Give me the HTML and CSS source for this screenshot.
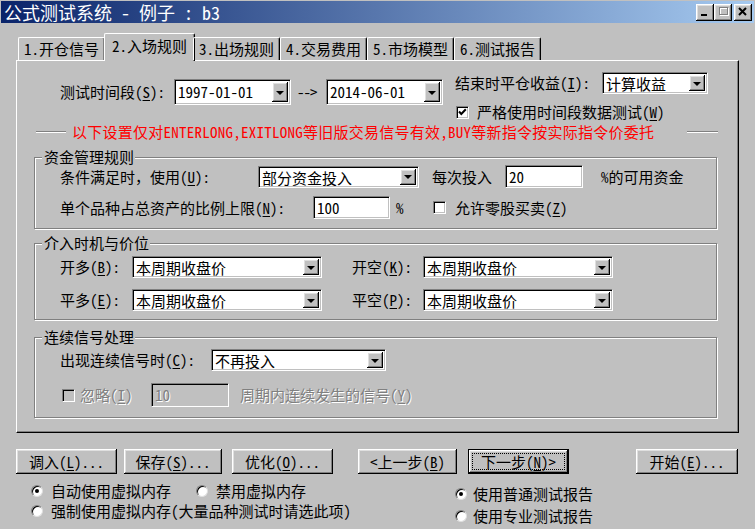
FILE: index.html
```html
<!DOCTYPE html>
<html lang="zh-CN">
<head>
  <meta charset="UTF-8">
  <title>公式测试系统</title>
  <link rel="stylesheet" href="styles.css">
</head>
<body>
<div class="window">
  <!-- 标题栏 -->
  <div class="titlebar">
    <span class="title">公式测试系统 - 例子 : b3</span>
    <div class="caption-btns">
      <span class="cap-btn"><svg width="16" height="14" viewBox="0 0 16 14"><rect x="4" y="9" width="6" height="2"/></svg></span>
      <span class="cap-btn"><svg width="16" height="14" viewBox="0 0 16 14"><rect x="4.5" y="2.5" width="8" height="7" fill="none" stroke="#fff" transform="translate(1 1)"/><rect x="4.5" y="2.5" width="8" height="7" fill="none" stroke="#808080"/><rect x="4" y="2" width="9" height="1" fill="#808080"/></svg></span>
      <span class="cap-btn close"><svg width="16" height="14" viewBox="0 0 16 14"><path d="M4 3 L11 10 M11 3 L4 10" stroke="#000" stroke-width="2"/></svg></span>
    </div>
  </div>

  <!-- 页签 -->
  <div class="tabs">
    <div class="tab">1.开仓信号</div>
    <div class="tab active">2.入场规则</div>
    <div class="tab">3.出场规则</div>
    <div class="tab">4.交易费用</div>
    <div class="tab">5.市场模型</div>
    <div class="tab">6.测试报告</div>
  </div>

  <div class="panel">
    <!-- 测试时间段 -->
    <div class="row-period">
      <div class="period">
        <span class="lbl w-period">测试时间段(<u>S</u>):</span>
        <div class="combo date"><span class="val">1997-01-01</span><i class="drop"></i></div>
        <span class="arrow">--&gt;</span>
        <div class="combo date"><span class="val">2014-06-01</span><i class="drop"></i></div>
      </div>
      <div class="close-opts">
        <div class="line">
          <span class="lbl w-close">结束时平仓收益(<u>I</u>):</span>
          <div class="combo calc"><span class="val">计算收益</span><i class="drop"></i></div>
        </div>
        <div class="check-line">
          <span class="check"><svg width="9" height="9" viewBox="0 0 9 9"><path d="M1 3.5 L3.3 6 L7.8 1.3" fill="none" stroke="#000" stroke-width="2"/></svg></span>
          <span>严格使用时间段数据测试(<u>W</u>)</span>
        </div>
      </div>
    </div>

    <div class="sep">
      <span class="etch short"></span>
      <span class="note">以下设置仅对ENTERLONG,EXITLONG等旧版交易信号有效,BUY等新指令按实际指令价委托</span>
      <span class="etch long"></span>
    </div>

    <!-- 资金管理规则 -->
    <div class="group g-fund">
      <span class="legend">资金管理规则</span>
      <div class="grow">
        <span class="lbl w-use">条件满足时，使用(<u>U</u>):</span>
        <div class="combo fund"><span class="val">部分资金投入</span><i class="drop"></i></div>
        <span class="lbl w-each">每次投入</span>
        <div class="edit amount">20</div>
        <span class="after">%的可用资金</span>
      </div>
      <div class="grow">
        <span class="lbl w-limit">单个品种占总资产的比例上限(<u>N</u>):</span>
        <div class="edit limit">100</div>
        <span class="pct">%</span>
        <span class="check empty"></span>
        <span class="check-text">允许零股买卖(<u>Z</u>)</span>
      </div>
    </div>

    <!-- 介入时机与价位 -->
    <div class="group g-price">
      <span class="legend">介入时机与价位</span>
      <div class="grow">
        <span class="lbl w-side">开多(<u>B</u>):</span>
        <div class="combo price"><span class="val">本周期收盘价</span><i class="drop"></i></div>
        <span class="lbl w-side2">开空(<u>K</u>):</span>
        <div class="combo price"><span class="val">本周期收盘价</span><i class="drop"></i></div>
      </div>
      <div class="grow">
        <span class="lbl w-side">平多(<u>E</u>):</span>
        <div class="combo price"><span class="val">本周期收盘价</span><i class="drop"></i></div>
        <span class="lbl w-side2">平空(<u>P</u>):</span>
        <div class="combo price"><span class="val">本周期收盘价</span><i class="drop"></i></div>
      </div>
    </div>

    <!-- 连续信号处理 -->
    <div class="group g-cont">
      <span class="legend">连续信号处理</span>
      <div class="grow">
        <span class="lbl w-cont">出现连续信号时(<u>C</u>):</span>
        <div class="combo cont"><span class="val">不再投入</span><i class="drop"></i></div>
      </div>
      <div class="grow skip">
        <span class="check empty disabled"></span>
        <span class="lbl w-skip off">忽略(<u>I</u>)</span>
        <div class="edit skip-n off">10</div>
        <span class="after off">周期内连续发生的信号(<u>Y</u>)</span>
      </div>
    </div>
  </div>

  <!-- 按钮 -->
  <div class="buttons">
    <button class="btn b-load">调入(<u>L</u>)...</button>
    <button class="btn b-save">保存(<u>S</u>)...</button>
    <button class="btn b-opt">优化(<u>O</u>)...</button>
    <button class="btn b-prev">&lt;上一步(<u>B</u>)</button>
    <button class="btn b-next default">下一步(<u>N</u>)&gt;</button>
    <button class="btn b-start">开始(<u>E</u>)...</button>
  </div>

  <div class="opts">
    <div class="opts-left">
      <div class="radio-row">
        <span class="radio on"></span><span>自动使用虚拟内存</span>
        <span class="radio second"></span><span>禁用虚拟内存</span>
      </div>
      <div class="radio-row">
        <span class="radio"></span><span>强制使用虚拟内存(大量品种测试时请选此项)</span>
      </div>
    </div>
    <div class="opts-right">
      <div class="radio-row narrow"><span class="radio on"></span><span>使用普通测试报告</span></div>
      <div class="radio-row narrow"><span class="radio"></span><span>使用专业测试报告</span></div>
    </div>
  </div>
</div>
</body>
</html>
```

FILE: styles.css
```css
* { box-sizing: border-box; }
body {
  margin: 0;
  background: #c0c0c0;
  color: #000;
  font-family: "Noto Sans Mono CJK SC", "Noto Sans CJK SC", sans-serif;
  font-size: 15px;
  line-height: 18px;
}
u { text-decoration-thickness: 1px; text-underline-offset: 2px; }
.window {
  width: 755px;
  height: 529px;
  overflow: hidden;
  background: #c0c0c0;
}

/* 标题栏 */
.titlebar {
  height: 22px;
  margin: 1px 1px 0 1px;
  background: linear-gradient(to right, #0a246a, #a6caf0);
  color: #fff;
  display: flex;
  justify-content: space-between;
  align-items: center;
  padding: 0 2px 0 3px;
}
.title { font-size: 18px; line-height: 22px; white-space: pre; }
.caption-btns { display: flex; }
.cap-btn {
  width: 18px; height: 17px;
  background: #c0c0c0;
  box-shadow: inset -1px -1px #000, inset 1px 1px #fff, inset -2px -2px #808080, inset 2px 2px #dfdfdf;
  display: flex; align-items: center; justify-content: center;
}
.cap-btn.close { margin-left: 2px; }

/* 页签 */
.tabs {
  display: flex;
  align-items: flex-end;
  height: 27px;
  margin: 10px 0 0 18px;
  position: relative;
  z-index: 1;
}
.tab {
  height: 23px;
  padding: 0 5px;
  border-top: 1px solid #fff;
  border-left: 1px solid #fff;
  border-right: 1px solid #000;
  box-shadow: inset -1px 0 #808080;
  border-radius: 2px 2px 0 0;
  line-height: 21px;
  white-space: nowrap;
}
.tab.active {
  height: 28px;
  margin: 0 -2px 0 -1px;
  padding: 0 7px;
  background: #c0c0c0;
  line-height: 24px;
  margin-bottom: -1px;
}

/* 页面主体 */
.panel {
  margin-left: 16px;
  width: 723px;
  height: 373px;
  border-top: 1px solid #fff;
  border-left: 1px solid #fff;
  border-right: 1px solid #000;
  border-bottom: 1px solid #000;
  box-shadow: inset -1px -1px #808080;
}
.lbl { display: inline-block; white-space: nowrap; }

.row-period { display: flex; margin-top: 11px; padding-left: 43px; }
.period { display: flex; align-items: center; margin-top: 7px; height: 26px; }
.w-period { width: 114px; }
.arrow { width: 24px; margin: 0 5px 0 6px; letter-spacing: -1px; }
.close-opts { margin-left: 12px; }
.close-opts .line { display: flex; align-items: center; height: 22px; }
.w-close { width: 147px; }
.check-line { display: flex; align-items: center; height: 16px; line-height: 16px; margin-top: 10px; padding-left: 1px; gap: 8px; }

/* 下拉框 / 编辑框 */
.combo, .edit {
  background: #fff;
  border: 1px solid;
  border-color: #808080 #fff #fff #808080;
  box-shadow: inset 1px 1px #000, inset -1px -1px #c0c0c0;
}
.combo { display: flex; align-items: stretch; padding: 2px; }
.combo .val { flex: 1; padding-left: 1px; line-height: 18px; white-space: nowrap; }
.drop {
  width: 16px;
  background: #c0c0c0;
  box-shadow: inset -1px -1px #000, inset 1px 1px #fff, inset -2px -2px #808080, inset 2px 2px #dfdfdf;
  display: flex; align-items: center; justify-content: center;
}
.drop::after {
  content: "";
  border-left: 4px solid transparent;
  border-right: 4px solid transparent;
  border-top: 4px solid #000;
  margin-top: 1px;
}
.combo.date { width: 117px; height: 26px; }
.combo.date .val { line-height: 20px; }
.combo.calc { width: 106px; height: 22px; }
.combo.fund { width: 161px; height: 22px; }
.combo.price { width: 190px; height: 22px; }
.combo.cont { width: 175px; height: 22px; }
.edit { padding: 2px 3px; line-height: 17px; }
.edit.amount { width: 78px; height: 23px; }
.edit.limit { width: 77px; height: 23px; }

/* 复选框 */
.check {
  width: 13px; height: 13px;
  flex: none;
  background: #fff;
  border: 1px solid;
  border-color: #808080 #fff #fff #808080;
  box-shadow: inset 1px 1px #000, inset -1px -1px #c0c0c0;
  display: flex; align-items: center; justify-content: center;
}
.check.disabled { background: #c0c0c0; }

/* 分隔线 */
.sep { display: flex; align-items: center; height: 20px; margin: 2px 20px 0 19px; }
.etch { height: 2px; border-top: 1px solid #808080; border-bottom: 1px solid #fff; }
.etch.short { width: 30px; }
.etch.long { flex: 1; margin-left: 33px; }
.note { color: #ff0000; margin-left: 6px; white-space: nowrap; letter-spacing: 0.25px; }

/* 分组框 */
.group {
  position: relative;
  margin-left: 17px;
  width: 683px;
  border: 1px solid #808080;
  box-shadow: inset 1px 1px #fff, 1px 1px #fff;
  padding-left: 25px;
}
.legend {
  position: absolute;
  top: -10px; left: 7px;
  padding: 0 1px 0 2px;
  background: #c0c0c0;
  line-height: 18px;
}
.grow { display: flex; align-items: center; }
.g-fund { margin-top: 15px; height: 72px; padding-top: 7px; }
.g-fund .grow { height: 23px; }
.g-fund .grow + .grow { margin-top: 8px; }
.w-use { width: 198px; }
.w-each { width: 73px; margin-left: 13px; }
.after { margin-left: 18px; white-space: nowrap; }
.w-limit { width: 253px; }
.pct { width: 37px; margin-left: 6px; }
.check-text { margin-left: 9px; }

.g-price { margin-top: 14px; height: 77px; padding-top: 12px; }
.g-price .grow { height: 22px; }
.g-price .grow + .grow { margin-top: 11px; }
.w-side { width: 72px; }
.w-side2 { width: 71px; margin-left: 30px; }

.g-cont { margin-top: 17px; height: 81px; padding-top: 11px; }
.g-cont .grow { height: 22px; }
.g-cont .skip { height: 24px; margin-top: 12px; padding-left: 2px; }
.w-cont { width: 151px; }
.w-skip { width: 71px; margin-left: 5px; }
.off { color: #808080; text-shadow: 1px 1px 0 #fff; }
.off u { text-decoration-color: #808080; }
.edit.off { background: #c0c0c0; width: 78px; height: 24px; }
.skip .after { margin-left: 11px; }

/* 按钮 */
.buttons { display: flex; margin: 16px 0 0 16px; height: 25px; }
.btn {
  height: 25px;
  padding: 0;
  border: none;
  background: #c0c0c0;
  font: inherit;
  color: #000;
  box-shadow: inset -1px -1px #000, inset 1px 1px #fff, inset -2px -2px #808080, inset 2px 2px #dfdfdf;
}
.b-load { width: 101px; }
.b-save { width: 98px; margin-left: 7px; }
.b-opt { width: 101px; margin-left: 10px; }
.b-prev { width: 99px; margin-left: 25px; }
.b-next { width: 101px; margin-left: 11px; }
.b-start { width: 102px; margin-left: 67px; }
.btn.default {
  position: relative;
  border: 1px solid #000;
}
.btn.default::after {
  content: "";
  position: absolute;
  inset: 3px;
  border: 1px dotted #000;
}

/* 单选项 */
.opts { display: flex; margin-left: 31px; }
.opts-left { width: 424px; margin-top: 8px; }
.opts-left .radio-row + .radio-row { margin-top: 2px; }
.opts-right { margin-top: 11px; }
.opts-right .radio-row + .radio-row { margin-top: 4px; }
.radio-row { display: flex; align-items: center; height: 18px; gap: 8px; white-space: nowrap; }
.radio-row.narrow { gap: 6px; }
.radio {
  width: 12px; height: 12px;
  flex: none;
  border-radius: 50%;
  background: #fff;
  border: 1px solid;
  border-color: #808080 #dfdfdf #dfdfdf #808080;
  box-shadow: inset 1px 1px #000;
  display: flex; align-items: center; justify-content: center;
}
.radio.on::after {
  content: "";
  width: 4px; height: 4px;
  border-radius: 50%;
  background: #000;
}
.radio.second { margin-left: 17px; }
```
